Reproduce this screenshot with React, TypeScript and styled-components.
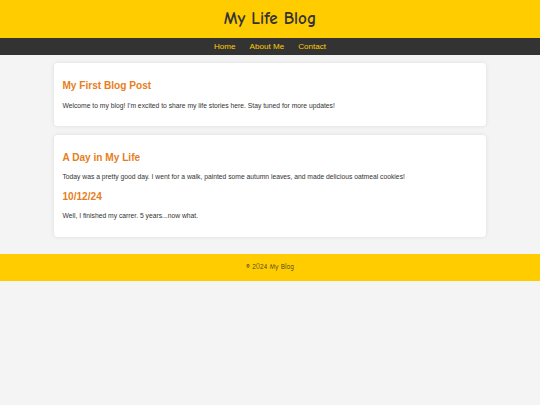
import styled, { createGlobalStyle } from "styled-components";

const GlobalStyle = createGlobalStyle`
  html, body {
    margin: 0;
    padding: 0;
  }
  body {
    background: #f4f4f4;
    font-family: "Liberation Sans", Arial, sans-serif;
    font-size: 6.75px;
    color: #333;
  }
`;

const posts = [
  {
    sections: [
      {
        title: "My First Blog Post",
        text: "Welcome to my blog! I'm excited to share my life stories here. Stay tuned for more updates!",
      },
    ],
  },
  {
    sections: [
      {
        title: "A Day in My Life",
        text: "Today was a pretty good day. I went for a walk, painted some autumn leaves, and made delicious oatmeal cookies!",
      },
      {
        title: "10/12/24",
        text: "Well, I finished my carrer. 5 years...now what.",
      },
    ],
  },
];

const navLinks = ["Home", "About Me", "Contact"];

export default function App() {
  return (
    <>
      <GlobalStyle />
      <Header>
        <SiteTitle>My Life Blog</SiteTitle>
      </Header>
      <Nav>
        {navLinks.map((link) => (
          <NavLink key={link} href="#">
            {link}
          </NavLink>
        ))}
      </Nav>
      <Main>
        {posts.map((post, i) => (
          <Card key={i}>
            {post.sections.map((s) => (
              <div key={s.title}>
                <PostTitle>{s.title}</PostTitle>
                <PostText>{s.text}</PostText>
              </div>
            ))}
          </Card>
        ))}
      </Main>
      <Footer>© 2024 My Blog</Footer>
    </>
  );
}

const comic = `"Comic Sans MS", "Comic Neue", cursive`;

const Header = styled.header`
  background: #ffcc00;
  text-align: center;
  padding: 8px 0;
`;

const SiteTitle = styled.h1`
  margin: 0;
  font-family: ${comic};
  font-size: 17px;
  line-height: 22px;
  font-weight: bold;
  color: #333;
`;

const Nav = styled.nav`
  background: #333;
  display: flex;
  justify-content: center;
  gap: 14px;
  padding: 4px 0;
`;

const NavLink = styled.a`
  color: #ffcc00;
  text-decoration: none;
  font-size: 8.1px;
  line-height: 9px;
`;

const Main = styled.main`
  width: 80%;
  margin: 0 auto;
  padding: 8.44px 0;
`;

const Card = styled.article`
  background: #fff;
  padding: 8.44px;
  margin-bottom: 8.44px;
  border-radius: 3.4px;
  box-shadow: 0 0 4px rgba(0, 0, 0, 0.1);
`;

const PostTitle = styled.h2`
  color: #e67e22;
  font-size: 10.125px;
  margin: 8.4px 0;
`;

const PostText = styled.p`
  margin: 6.75px 0;
  line-height: 1.7;
`;

const Footer = styled.footer`
  background: #ffcc00;
  text-align: center;
  padding: 8.44px 0;
  font-family: ${comic};
  font-size: 7px;
  line-height: 10.2px;
  color: #333;
`;
